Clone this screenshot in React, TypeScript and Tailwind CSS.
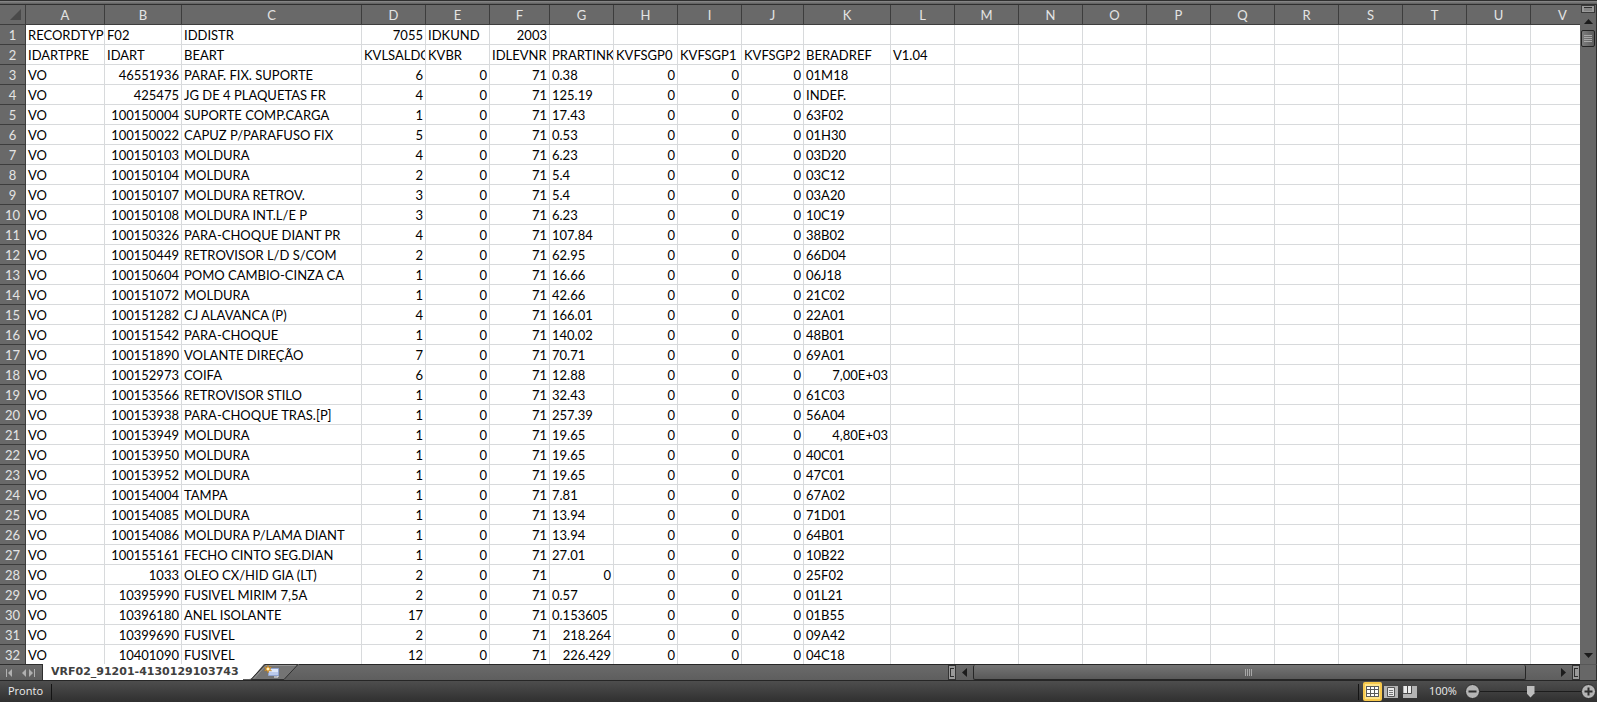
const COLUMNS = [
  { name: 'A', width: 'w-[79px]' },
  { name: 'B', width: 'w-[77px]' },
  { name: 'C', width: 'w-[180px]' },
  { name: 'D', width: 'w-16' },
  { name: 'E', width: 'w-16' },
  { name: 'F', width: 'w-[60px]' },
  { name: 'G', width: 'w-16' },
  { name: 'H', width: 'w-16' },
  { name: 'I', width: 'w-16' },
  { name: 'J', width: 'w-[62px]' },
  { name: 'K', width: 'w-[87px]' },
  { name: 'L', width: 'w-16' },
  { name: 'M', width: 'w-16' },
  { name: 'N', width: 'w-16' },
  { name: 'O', width: 'w-16' },
  { name: 'P', width: 'w-16' },
  { name: 'Q', width: 'w-16' },
  { name: 'R', width: 'w-16' },
  { name: 'S', width: 'w-16' },
  { name: 'T', width: 'w-16' },
  { name: 'U', width: 'w-16' },
  { name: 'V', width: 'w-16' },
]

// numbers go to the right of the cell, strings to the left
type Cell = string | number | { right: string }

const item = (id: number, name: string, saldo: number, price: Cell, ref: Cell): Cell[] => [
  'VO', id, name, saldo, 0, 71, price, 0, 0, 0, ref,
]

const ROWS: Cell[][] = [
  ['RECORDTYP', 'F02', 'IDDISTR', 7055, 'IDKUND', 2003],
  ['IDARTPRE', 'IDART', 'BEART', 'KVLSALDO', 'KVBR', 'IDLEVNR', 'PRARTINK', 'KVFSGP0', 'KVFSGP1', 'KVFSGP2', 'BERADREF', 'V1.04'],
  item(46551936, 'PARAF. FIX. SUPORTE', 6, '0.38', '01M18'),
  item(425475, 'JG DE 4 PLAQUETAS FR', 4, '125.19', 'INDEF.'),
  item(100150004, 'SUPORTE COMP.CARGA', 1, '17.43', '63F02'),
  item(100150022, 'CAPUZ P/PARAFUSO FIX', 5, '0.53', '01H30'),
  item(100150103, 'MOLDURA', 4, '6.23', '03D20'),
  item(100150104, 'MOLDURA', 2, '5.4', '03C12'),
  item(100150107, 'MOLDURA RETROV.', 3, '5.4', '03A20'),
  item(100150108, 'MOLDURA INT.L/E P', 3, '6.23', '10C19'),
  item(100150326, 'PARA-CHOQUE DIANT PR', 4, '107.84', '38B02'),
  item(100150449, 'RETROVISOR L/D S/COM', 2, '62.95', '66D04'),
  item(100150604, 'POMO CAMBIO-CINZA CA', 1, '16.66', '06J18'),
  item(100151072, 'MOLDURA', 1, '42.66', '21C02'),
  item(100151282, 'CJ ALAVANCA (P)', 4, '166.01', '22A01'),
  item(100151542, 'PARA-CHOQUE', 1, '140.02', '48B01'),
  item(100151890, 'VOLANTE DIREÇÃO', 7, '70.71', '69A01'),
  item(100152973, 'COIFA', 6, '12.88', { right: '7,00E+03' }),
  item(100153566, 'RETROVISOR STILO', 1, '32.43', '61C03'),
  item(100153938, 'PARA-CHOQUE TRAS.[P]', 1, '257.39', '56A04'),
  item(100153949, 'MOLDURA', 1, '19.65', { right: '4,80E+03' }),
  item(100153950, 'MOLDURA', 1, '19.65', '40C01'),
  item(100153952, 'MOLDURA', 1, '19.65', '47C01'),
  item(100154004, 'TAMPA', 1, '7.81', '67A02'),
  item(100154085, 'MOLDURA', 1, '13.94', '71D01'),
  item(100154086, 'MOLDURA P/LAMA DIANT', 1, '13.94', '64B01'),
  item(100155161, 'FECHO CINTO SEG.DIAN', 1, '27.01', '10B22'),
  item(1033, 'OLEO CX/HID GIA (LT)', 2, 0, '25F02'),
  item(10395990, 'FUSIVEL MIRIM 7,5A', 2, '0.57', '01L21'),
  item(10396180, 'ANEL ISOLANTE', 17, '0.153605', '01B55'),
  item(10399690, 'FUSIVEL', 2, { right: '218.264' }, '09A42'),
  item(10401090, 'FUSIVEL', 12, { right: '226.429' }, '04C18'),
]

const HEADER_CELL =
  'h-5 border-b border-r border-[#3d3d3d] bg-[#696969] p-0 pt-0.5 text-center font-normal leading-[17px] text-[#e4e4e4]'

function SheetCell({ value }: { value?: Cell }) {
  const isRight = typeof value === 'number' || typeof value === 'object'
  return (
    <td
      className={`h-5 overflow-hidden whitespace-nowrap border-b border-r border-[#d8dadc] p-0 px-0.5 pt-0.5 leading-[17px] ${
        isRight ? 'text-right' : 'text-left'
      }`}
    >
      {typeof value === 'object' ? value.right : value}
    </td>
  )
}

function Sheet() {
  return (
    <div className="min-w-0 flex-1 overflow-hidden bg-white">
      <table className="w-full table-fixed border-separate border-spacing-0 text-[13px] text-black">
        <colgroup>
          <col className="w-[26px]" />
          {COLUMNS.map((col) => (
            <col key={col.name} className={col.width} />
          ))}
        </colgroup>
        <thead>
          <tr>
            <th className="h-5 border-b border-r border-[#3d3d3d] bg-[#696969] p-0 pr-1">
              <button aria-label="Selecionar tudo" className="flex w-full justify-end">
                <svg width="11" height="11" viewBox="0 0 11 11">
                  <path d="M11 0v11H0z" fill="#4a4a4a" />
                </svg>
              </button>
            </th>
            {COLUMNS.map((col) => (
              <th key={col.name} scope="col" className={HEADER_CELL}>
                {col.name}
              </th>
            ))}
          </tr>
        </thead>
        <tbody>
          {ROWS.map((row, i) => (
            <tr key={i}>
              <th scope="row" className={HEADER_CELL}>
                {i + 1}
              </th>
              {COLUMNS.map((col, c) => (
                <SheetCell key={col.name} value={row[c]} />
              ))}
            </tr>
          ))}
        </tbody>
      </table>
    </div>
  )
}

function VerticalScroll() {
  return (
    <div className="flex w-[17px] shrink-0 flex-col items-center border-r border-[#2e2e2e] bg-[#676767]">
      <button aria-label="Dividir" className="flex h-2 w-3.5 items-center justify-center border border-[#3a3a3a] bg-[#9a9a9a]">
        <svg width="8" height="4" viewBox="0 0 8 4">
          <path d="M0 0h8v1H0z" fill="#2e2e2e" />
          <path d="M0 1h8v3H0z" fill="#858585" />
        </svg>
      </button>
      <button aria-label="Rolar para cima" className="flex h-[17px] w-3.5 items-center justify-center">
        <svg width="9" height="5" viewBox="0 0 9 5">
          <path d="M4.500 0L9 5H0z" fill="#1c1c1c" />
        </svg>
      </button>
      <div className="flex h-[17px] w-3.5 items-center justify-center rounded-[2px] border border-[#232323] bg-gradient-to-r from-[#7d7d7d] to-[#5c5c5c]">
        <svg width="8" height="8" viewBox="0 0 8 8">
          <path d="M0 .5h8M0 2.500h8M0 4.500h8M0 6.500h8" stroke="#a8a8a8" />
        </svg>
      </div>
      <button aria-label="Rolar para baixo" className="mt-auto flex h-[17px] w-3.5 items-center justify-center">
        <svg width="9" height="5" viewBox="0 0 9 5">
          <path d="M0 0h9L4.500 5z" fill="#1c1c1c" />
        </svg>
      </button>
    </div>
  )
}

function SplitHandle() {
  return (
    <button aria-label="Dividir" className="flex w-2 shrink-0 items-center justify-center border border-[#333] bg-[#9a9a9a]">
      <svg width="4" height="9" viewBox="0 0 4 9">
        <path d="M0 0h4v1H1v7h3v1H0z" fill="#2e2e2e" />
      </svg>
    </button>
  )
}

function HorizontalScroll() {
  return (
    <div className="flex min-w-0 flex-[2] border-t border-[#262626]">
      <SplitHandle />
      <button aria-label="Rolar para a esquerda" className="flex w-[17px] shrink-0 items-center justify-center">
        <svg width="5" height="9" viewBox="0 0 5 9">
          <path d="M5 0v9L0 4.500z" fill="#1c1c1c" />
        </svg>
      </button>
      <div className="flex min-w-0 flex-1">
        <div className="flex w-[95%] items-center justify-center rounded-[2px] border border-t-0 border-[#262626] bg-gradient-to-b from-[#757575] to-[#595959]">
          <svg width="8" height="7" viewBox="0 0 8 7">
            <path d="M.5 0v7M2.500 0v7M4.500 0v7M6.500 0v7" stroke="#a8a8a8" />
          </svg>
        </div>
      </div>
      <button aria-label="Rolar para a direita" className="flex w-[17px] shrink-0 items-center justify-center">
        <svg width="5" height="9" viewBox="0 0 5 9">
          <path d="M0 0v9l5-4.500z" fill="#1c1c1c" />
        </svg>
      </button>
      <SplitHandle />
    </div>
  )
}

function TabBar() {
  return (
    <div className="flex h-[17px] shrink-0 border-b border-[#262626] bg-gradient-to-b from-[#6b6b6b] to-[#5e5e5e]">
      <nav className="flex min-w-0 flex-[3]">
        <div className="flex w-[43px] shrink-0 items-center justify-between border-r border-t border-[#2e2e2e] px-1.5">
          <button aria-label="Primeira planilha">
            <svg className="block" width="7" height="8" viewBox="0 0 7 8">
              <path d="M0 0h1v8H0zM6 0v8L2 4z" fill="#b0b0b0" />
            </svg>
          </button>
          <button aria-label="Última planilha">
            <svg className="block" width="14" height="8" viewBox="0 0 14 8">
              <path d="M4 0v8L0 4zM7 0l4 4-4 4zM12 0h1v8h-1z" fill="#b0b0b0" />
            </svg>
          </button>
        </div>
        <button className="shrink-0 bg-white pl-2 pr-1 font-['DejaVu_Sans',sans-serif] text-[11px] font-bold leading-4 text-[#404040]">
          VRF02_91201-4130129103743
        </button>
        <button aria-label="Inserir planilha" className="shrink-0">
          <svg className="block" width="56" height="16" viewBox="0 0 56 16">
            <path d="M0 0h21L9 14q-1 1-3 1H0z" fill="#fff" />
            <path d="M8 15.500L22 .5h33L41 15.500z" fill="#747474" stroke="#303030" />
            <path d="M11 14.500L23 1.500h30" fill="none" stroke="#949494" />
            <path d="M25.500 4.500h10v7h-10z" fill="#dfe8fa" stroke="#8fa3cf" />
            <path d="M26 8h9v3h-9z" fill="#bccbec" />
            <path d="M31 13h4v-1" fill="none" stroke="#f2f5fc" />
            <path d="M25 1l1 2.500L28.500 3 27 5l1.500 2-2.500-.5L25 9l-1-2.500-2.500.5L23 5l-1.500-2 2.500.5z" fill="#f5b343" stroke="#a8701c" strokeWidth=".5" />
            <circle cx="25" cy="5" r="1.200" fill="#fff3c4" />
          </svg>
        </button>
        <div className="flex-1 border-t border-[#262626]" />
      </nav>
      <HorizontalScroll />
      <div className="w-[17px] shrink-0 border-r border-t border-[#2e2e2e] border-t-[#585858] bg-[#676767]" />
    </div>
  )
}

function StatusBar() {
  return (
    <footer className="flex h-[21px] shrink-0 items-center bg-gradient-to-b from-[#4e4e4e] to-[#303030] pl-2 pr-px font-['Open_Sans',sans-serif] text-[11px] text-[#ececec]">
      <span>Pronto</span>
      <span className="ml-2 h-4 w-px bg-[#141414]" />
      <div className="ml-auto flex items-center">
        <span className="mr-1 h-4 w-px bg-[#141414]" />
        <button aria-label="Normal" className="flex h-[19px] w-[19px] items-center justify-center rounded-[2px] border-2 border-[#f7c84c] bg-[#ffe48a]">
          <svg width="13" height="11" viewBox="0 0 13 11">
            <path d="M0 0h13v11H0z" fill="#5b5b5b" />
            <path d="M1 1h3v2H1zM5 1h3v2H5zM9 1h3v2H9zM1 4h3v3H1zM5 4h3v3H5zM9 4h3v3H9zM1 8h3v2H1zM5 8h3v2H5zM9 8h3v2H9z" fill="#fff" />
          </svg>
        </button>
        <button aria-label="Layout da Página" className="ml-0.5">
          <svg className="block" width="14" height="12" viewBox="0 0 14 12">
            <path d="M0 0h14v12H0z" fill="#b4b4b4" />
            <path d="M3.500 1.500h7v9h-7z" fill="#e8e8e8" stroke="#555" />
            <path d="M5 4.500h4M5 6.500h4M5 8.500h4" stroke="#777" />
          </svg>
        </button>
        <button aria-label="Visualização da Quebra de Página" className="ml-[5px]">
          <svg className="block" width="14" height="12" viewBox="0 0 14 12">
            <path d="M0 0h14v12H0z" fill="#b4b4b4" />
            <path d="M1 0h3v7H1zM5 0h3v7H5z" fill="#ededed" />
            <path d="M4.500 0v7.500M0 7.500h8.500V0" fill="none" stroke="#4a4a4a" />
          </svg>
        </button>
        <button className="ml-3 w-7 text-left">100%</button>
        <button aria-label="Reduzir" className="ml-2">
          <svg className="block" width="15" height="15" viewBox="0 0 15 15">
            <circle cx="7.500" cy="7.500" r="7" fill="#b4b4b4" stroke="#2a2a2a" />
            <path d="M3.500 7.500h8" stroke="#2e2e2e" strokeWidth="2" />
          </svg>
        </button>
        <input
          type="range"
          aria-label="Zoom"
          defaultValue={50}
          className="h-3 w-[101px] appearance-none bg-[linear-gradient(#1c1c1c,#1c1c1c)] bg-[length:100%_1px] bg-center bg-no-repeat [&::-webkit-slider-thumb]:h-3 [&::-webkit-slider-thumb]:w-2 [&::-webkit-slider-thumb]:appearance-none [&::-webkit-slider-thumb]:bg-[#bdbdbd] [&::-webkit-slider-thumb]:[clip-path:polygon(0_0,100%_0,100%_65%,50%_100%,0_65%)]"
        />
        <button aria-label="Ampliar">
          <svg className="block" width="15" height="15" viewBox="0 0 15 15">
            <circle cx="7.500" cy="7.500" r="7" fill="#b4b4b4" stroke="#2a2a2a" />
            <path d="M3.500 7.500h8M7.500 3.500v8" stroke="#2e2e2e" strokeWidth="2" />
          </svg>
        </button>
      </div>
    </footer>
  )
}

export default function App() {
  return (
    <div className="flex h-screen flex-col overflow-hidden bg-[#656565] font-['Lato',sans-serif]">
      <div className="h-[5px] shrink-0 border-y border-[#303030] bg-gradient-to-b from-[#8c8c8c] to-[#5c5c5c]" />
      <div className="flex min-h-0 flex-1">
        <Sheet />
        <VerticalScroll />
      </div>
      <TabBar />
      <StatusBar />
    </div>
  )
}
